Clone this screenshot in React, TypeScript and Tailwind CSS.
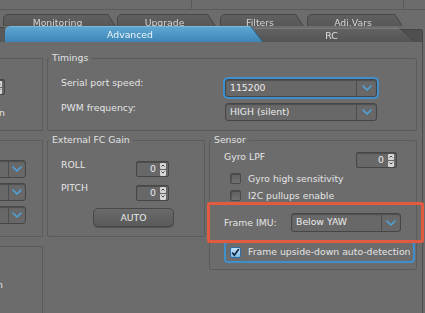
import React from 'react';

const Chevron: React.FC = () => (
  <svg width="10" height="6" viewBox="0 0 10 6">
    <path d="M1 1l4 4 4-4" fill="none" stroke="#4ea4e2" strokeWidth="1.5" strokeLinecap="round" strokeLinejoin="round" />
  </svg>
);

const Combo: React.FC<{ value?: string; className?: string; btn?: string; focus?: boolean }> = ({
  value = '',
  className = '',
  btn = 'w-[20px]',
  focus,
}) => (
  <div
    className={`flex h-[18px] shrink-0 rounded-[3px] border border-[#464646] bg-[#686868] shadow-[inset_0_1px_1px_rgba(0,0,0,0.25)] ${
      focus ? 'ring-2 ring-[#3f8fcc]' : ''
    } ${className}`}
  >
    <div className="flex-1 overflow-hidden whitespace-nowrap pl-[4px] leading-[16px] text-[#ededed]">{value}</div>
    <div className={`flex items-center justify-center border-l border-[#4e4e4e] ${btn}`}>
      <Chevron />
    </div>
  </div>
);

const ArrowBox: React.FC<{ up?: boolean }> = ({ up }) => (
  <div className="flex h-[6px] w-[6px] items-center justify-center rounded-[1px] bg-[#d6d6d6]">
    <svg width="4" height="3" viewBox="0 0 4 3">
      <path d={up ? 'M0.5 2.5L2 1l1.5 1.5' : 'M0.5 0.5L2 2l1.5-1.5'} fill="none" stroke="#333" strokeWidth="0.9" />
    </svg>
  </div>
);

const Spinner: React.FC<{ className?: string; value?: string }> = ({ className = '', value = '0' }) => (
  <div
    className={`flex h-[16px] shrink-0 items-center rounded-[2px] border border-[#464646] bg-[#686868] shadow-[inset_0_1px_1px_rgba(0,0,0,0.25)] ${className}`}
  >
    <span className="flex-1 pr-[4px] text-right leading-none text-[#ededed]">{value}</span>
    <div className="mr-[2px] flex flex-col gap-[1px]">
      <ArrowBox up />
      <ArrowBox />
    </div>
  </div>
);

const CheckBox: React.FC<{ checked?: boolean }> = ({ checked }) =>
  checked ? (
    <div className="flex h-[11px] w-[11px] shrink-0 items-center justify-center rounded-[2px] border border-[#2f6fa3] bg-gradient-to-b from-[#c4e2f8] to-[#7db9e8]">
      <svg width="9" height="9" viewBox="0 0 9 9">
        <path d="M1.3 4.6l2.1 2.6L7.8 1" fill="none" stroke="#13253a" strokeWidth="1.7" />
      </svg>
    </div>
  ) : (
    <div className="h-[11px] w-[11px] shrink-0 rounded-[2px] border border-[#4a4a4a] bg-gradient-to-b from-[#5f5f5f] to-[#717171] shadow-[inset_1px_1px_0_rgba(0,0,0,0.2)]" />
  );

const Legend: React.FC<{ children: React.ReactNode }> = ({ children }) => (
  <legend className="ml-[1px] px-[3px] leading-[12px] text-[#e2e2e2]">{children}</legend>
);

const BackTab: React.FC<{ label: string; className: string }> = ({ label, className }) => (
  <div className="shrink-0 drop-shadow-[1px_0_0_#444]">
    <div
      className={`h-[20px] rounded-tl-[5px] border border-[#474747] bg-gradient-to-b from-[#606060] to-[#525252] pr-[8px] text-center leading-[16px] text-[#d4d4d4] [clip-path:polygon(0_0,calc(100%-13px)_0,100%_100%,0_100%)] ${className}`}
    >
      {label}
    </div>
  </div>
);

export default function App() {
  return (
    <div className="relative h-[313px] w-[425px] overflow-hidden bg-[#6c6c6c] font-['DejaVu_Sans',sans-serif] text-[9.3px] text-[#e4e4e4]">
      {/* top strip */}
      <div className="flex h-[10px] border-b border-[#5a5a5a]">
        <div className="w-[192px] border-r border-[#5a5a5a]" />
        <div className="w-[212px] border-r border-[#5a5a5a]" />
      </div>

      {/* back row of tabs */}
      <div className="mt-[4px] flex h-[12px] overflow-hidden">
        <BackTab label="Monitoring" className="ml-[3px] w-[117px]" />
        <BackTab label="Upgrade" className="ml-[-3px] w-[103px]" />
        <BackTab label="Filters" className="w-[88px]" />
        <BackTab label="Adj.Vars" className="ml-[-1px] w-[100px]" />
      </div>

      {/* front row of tabs */}
      <div className="flex h-[16px] items-end">
        <div className="h-[15px] w-[5px] shrink-0 border-t border-[#4a4a4a] bg-[#585858]" />
        <div className="relative z-30 shrink-0 drop-shadow-[1px_0_0_#2f6890]">
          <div className="h-[16px] w-[257px] rounded-tl-[6px] border-t border-[#7cb8de] bg-gradient-to-b from-[#5da6d2] to-[#3e86b7] pr-[7px] text-center leading-[15px] text-[#eef4f9] [clip-path:polygon(0_0,calc(100%-12px)_0,100%_100%,0_100%)]">
            Advanced
          </div>
        </div>
        <div className="relative z-20 ml-[-12px] shrink-0 drop-shadow-[1px_0_0_#444]">
          <div className="h-[14px] w-[164px] rounded-tl-[5px] border-t border-[#7a7a7a] bg-gradient-to-b from-[#626262] to-[#545454] pl-[14px] pr-[15px] text-center leading-[14px] text-[#e0e0e0] [clip-path:polygon(0_0,calc(100%-15px)_0,100%_100%,0_100%)]">
            RC
          </div>
        </div>
        <div className="relative z-10 ml-[-14px] h-[13px] w-[23px] shrink-0 rounded-tr-[3px] border-r border-t border-[#444] bg-[#4f4f4f]" />
      </div>

      {/* content */}
      <div className="flex h-[271px] w-[423px] gap-[4px] border-r border-[#4f4f4f]">
        {/* left column (cut off) */}
        <div className="flex w-[43px] shrink-0 flex-col overflow-hidden">
          <div className="mt-[16px] flex h-[73px] shrink-0 flex-col border-y border-r border-[#5b5b5b]">
            <Spinner className="ml-[-28px] mt-[20px] w-[33px]" />
            <div className="ml-[-1px] mt-[12px] leading-[12px]">n</div>
          </div>
          <div className="mt-[9px] flex h-[97px] shrink-0 flex-col gap-[5px] border-y border-r border-[#5b5b5b]">
            <Combo className="ml-[-14px] mt-[19px] h-[16px] w-[40px]" btn="w-[17px]" />
            <Combo className="ml-[-14px] h-[16px] w-[40px]" btn="w-[17px]" />
            <Combo className="ml-[-14px] h-[16px] w-[40px]" btn="w-[17px]" />
          </div>
          <div className="mt-[9px] h-[80px] shrink-0 border-r border-t border-[#5b5b5b]">
            <div className="ml-[-3px] mt-[32px] leading-[12px]">n</div>
          </div>
        </div>

        {/* right column */}
        <div className="flex flex-1 flex-col pt-[10px]">
          <fieldset className="w-[370px] rounded-[2px] border border-[#5b5b5b] pb-[9px]">
            <Legend>Timings</Legend>
            <div className="mt-[15px] flex items-start pl-[13px]">
              <span className="mt-[-2px] w-[164px] leading-[12px]">Serial port speed:</span>
              <Combo value="115200" focus className="w-[152px]" />
            </div>
            <div className="mt-[6px] flex items-start pl-[13px]">
              <span className="mt-[-1px] w-[164px] leading-[12px]">PWM frequency:</span>
              <Combo value="HIGH (silent)" className="w-[152px]" />
            </div>
          </fieldset>

          <div className="mt-[3px] flex items-start gap-[4px]">
            <fieldset className="w-[158px] shrink-0 rounded-[2px] border border-[#5b5b5b] pb-[9px]">
              <Legend>External FC Gain</Legend>
              <div className="mt-[15px] flex items-start pl-[13px]">
                <span className="mt-[-2px] w-[75px] leading-[12px]">ROLL</span>
                <Spinner className="w-[33px]" />
              </div>
              <div className="mt-[8px] flex items-start pl-[13px]">
                <span className="mt-[-3px] w-[75px] leading-[12px]">PITCH</span>
                <Spinner className="w-[33px]" />
              </div>
              <div className="mt-[7px] pl-[45px]">
                <button className="h-[19px] w-[81px] rounded-[5px] border border-[#484848] bg-gradient-to-b from-[#6a6a6a] to-[#5a5a5a] text-[#e8e8e8] shadow-[0_1px_0_rgba(0,0,0,0.25)]">
                  AUTO
                </button>
              </div>
            </fieldset>

            <fieldset className="w-[208px] shrink-0 rounded-[2px] border border-[#5b5b5b] pb-[6px]">
              <Legend>Sensor</Legend>
              <div className="mt-[6px] flex h-[16px] items-start justify-between pl-[14px] pr-[19px]">
                <span className="mt-[-1px] leading-[12px]">Gyro LPF</span>
                <Spinner className="w-[41px]" />
              </div>
              <div className="mt-[2px] flex h-[17px] items-center gap-[7px] pl-[20px]">
                <CheckBox />
                <span>Gyro high sensitivity</span>
              </div>
              <div className="flex h-[17px] items-center gap-[7px] pl-[20px]">
                <CheckBox />
                <span>I2C pullups enable</span>
              </div>
              <div className="mt-[9px] flex h-[19px] items-center pl-[14px]">
                <span className="w-[67px]">Frame IMU:</span>
                <Combo value="Below YAW" className="h-[19px] w-[110px]" btn="w-[19px]" />
              </div>
              <div className="ml-[14px] mt-[9px] flex h-[22px] w-[191px] items-center gap-[7px] rounded-[4px] border-2 border-[#3f8fcc] pl-[4px]">
                <CheckBox checked />
                <span className="whitespace-nowrap">Frame upside-down auto-detection</span>
              </div>
            </fieldset>
          </div>
        </div>
      </div>

      {/* annotation */}
      <div className="absolute left-[207px] top-[202px] h-[41px] w-[217px] rounded-[3px] border-[3px] border-[#e25a3f]" />
    </div>
  );
}
